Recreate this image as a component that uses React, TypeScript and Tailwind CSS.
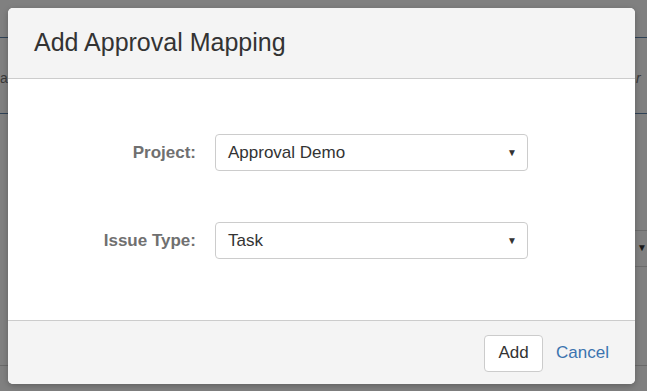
import React from "react";

export default function App() {
  const font = { fontFamily: '"Liberation Sans", Arial, sans-serif' };
  return (
    <div className="relative w-[647px] h-[391px] overflow-hidden bg-[#808080]" style={font}>
      {/* underlying page bits (dimmed) */}
      <div className="absolute left-0 right-0 top-[37px] h-px bg-[#2f4256]" />
      <div className="absolute left-0 right-0 top-[113px] h-px bg-[#2f4256]" />
      <div className="absolute left-0 top-[68px] text-[14px] text-[#3a3a3a]">a</div>
      <div className="absolute left-[636px] top-[68px] text-[14px] italic text-[#3a3a3a] whitespace-nowrap">r</div>
      <div className="absolute left-[600px] w-[60px] top-[230px] h-[37px] border-y border-[#6c6c6c]" />
      <div className="absolute left-[637px] top-[240px] text-[10px] text-[#1a1a1a]">▼</div>
      <div className="absolute left-0 right-0 top-[365px] h-px bg-[#6a6a6a]" />

      {/* modal */}
      <div className="absolute left-[8px] top-[8px] w-[627px] h-[376px] rounded-[5px] overflow-hidden flex flex-col bg-white shadow-[0_2px_6px_rgba(0,0,0,0.25)]">
        <div className="h-[71px] shrink-0 bg-[#f4f4f4] border-b border-[#cccccc] flex items-center pl-[26px] pb-[1px]">
          <h2 className="text-[25px] text-[#333333] leading-none">Add Approval Mapping</h2>
        </div>
        <div className="flex-1 bg-white pt-[55px] flex flex-col gap-[51px]">
          <div className="flex items-center">
            <label className="w-[188px] text-right font-bold text-[17px] text-[#707070]">Project:</label>
            <div className="ml-[19px] w-[313px] h-[37px] border border-[#cccccc] rounded-[4px] flex items-center justify-between pl-[12px] pr-[10px] text-[17px] text-[#333333]">
              <span>Approval Demo</span>
              <span className="text-[10px] text-[#333333]">▼</span>
            </div>
          </div>
          <div className="flex items-center">
            <label className="w-[188px] text-right font-bold text-[17px] text-[#707070]">Issue Type:</label>
            <div className="ml-[19px] w-[313px] h-[37px] border border-[#cccccc] rounded-[4px] flex items-center justify-between pl-[12px] pr-[10px] text-[17px] text-[#333333]">
              <span>Task</span>
              <span className="text-[10px] text-[#333333]">▼</span>
            </div>
          </div>
        </div>
        <div className="h-[64px] shrink-0 bg-[#f4f4f4] border-t border-[#cccccc] flex items-center justify-end pr-[26px] pt-[1px]">
          <button className="w-[59px] h-[37px] bg-white border border-[#cccccc] rounded-[4px] text-[17px] text-[#333333]">Add</button>
          <a className="ml-[13px] text-[17px] text-[#3b73af]">Cancel</a>
        </div>
      </div>
    </div>
  );
}
